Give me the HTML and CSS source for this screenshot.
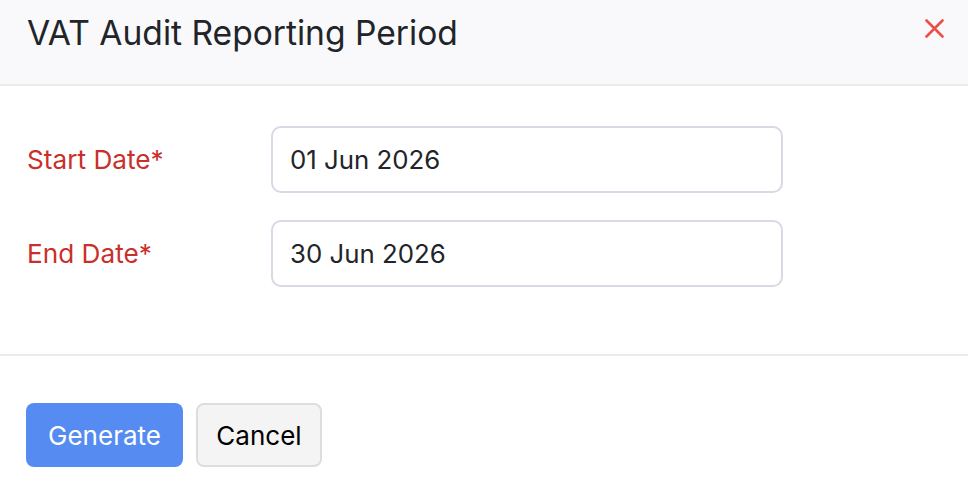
FILE: index.html
```html
<!DOCTYPE html>
<html lang="en">
<head>
<meta charset="utf-8">
<title>VAT Audit Reporting Period</title>
<link rel="stylesheet" href="styles.css">
</head>
<body>
<div class="modal">
  <header class="modal-header">
    <h1 class="modal-title">VAT Audit Reporting Period</h1>
    <button class="close-btn" aria-label="Close">
      <svg width="19" height="19" viewBox="0 0 19 19"><path d="M1.5 1.5 L17.5 17.5 M17.5 1.5 L1.5 17.5" stroke="#ea4f48" stroke-width="2.6" stroke-linecap="round"/></svg>
    </button>
  </header>
  <section class="modal-body">
    <div class="form-row">
      <label class="form-label">Start Date*</label>
      <div class="form-input">01 Jun 2026</div>
    </div>
    <div class="form-row">
      <label class="form-label">End Date*</label>
      <div class="form-input">30 Jun 2026</div>
    </div>
  </section>
  <footer class="modal-footer">
    <button class="btn btn-primary">Generate</button>
    <button class="btn btn-secondary">Cancel</button>
  </footer>
</div>
</body>
</html>
```

FILE: styles.css
```css
* { box-sizing: border-box; }
html, body { margin: 0; padding: 0; background: #fff; }
body {
  font-family: Inter, "Noto Sans", sans-serif;
  color: #212529;
  width: 968px;
  height: 490px;
  overflow: hidden;
}
.modal-header {
  height: 86px;
  background: #f9f9fb;
  border-bottom: 2px solid #ebebeb;
  display: flex;
  align-items: flex-start;
  justify-content: space-between;
  padding: 0 24px 0 27px;
}
.modal-title {
  margin: 0;
  font-size: 33.6px;
  font-weight: 400;
  line-height: 40px;
  padding-top: 13px;
  color: #212529;
}
.close-btn {
  border: 0;
  background: none;
  padding: 0;
  margin-top: 19px;
  width: 19px;
  height: 19px;
  display: flex;
}
.modal-body {
  padding: 40px 0 67px 27px;
  border-bottom: 2px solid #ebebeb;
  display: flex;
  flex-direction: column;
  gap: 27px;
}
.form-row {
  display: flex;
  align-items: center;
}
.form-label {
  width: 244px;
  font-size: 26.2px;
  color: #c9302c;
}
.form-input {
  width: 512px;
  height: 67px;
  border: 2px solid #d9d8e6;
  border-radius: 10px;
  padding: 0 17px;
  display: flex;
  align-items: center;
  font-size: 25.8px;
  color: #212529;
}
.modal-footer {
  padding: 47px 26px 0;
  display: flex;
  gap: 13px;
}
.btn {
  font-family: Inter, "Noto Sans", sans-serif;
  font-size: 26px;
  height: 64px;
  border-radius: 8px;
  padding: 0;
}
.btn-primary {
  background: #568cf2;
  color: #fff;
  border: 0;
  width: 157px;
}
.btn-secondary {
  background: #f4f4f4;
  color: #000;
  border: 2px solid #dddddd;
  width: 126px;
}
```
